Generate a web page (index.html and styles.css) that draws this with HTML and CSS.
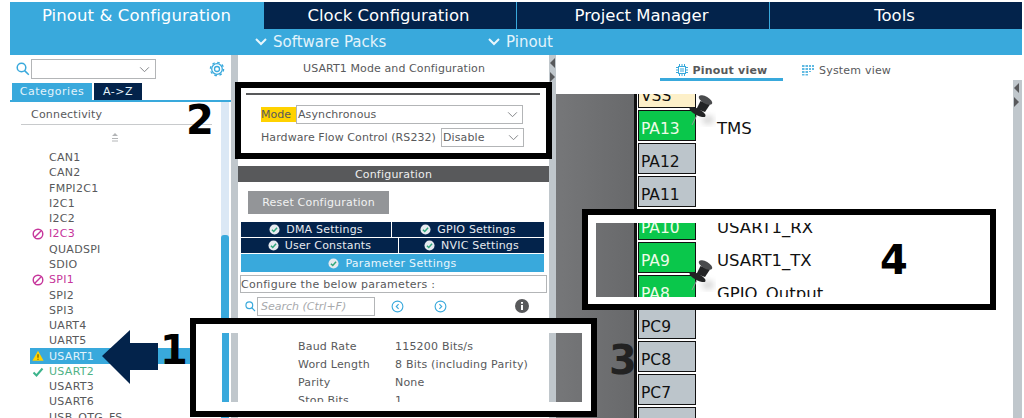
FILE: index.html
```html
<!DOCTYPE html>
<html lang="en">
<head>
<meta charset="utf-8">
<title>Pinout &amp; Configuration</title>
<link rel="stylesheet" href="styles.css">
</head>
<body>
<div class="app">
  <nav class="tabs">
    <div class="tab tab-active">Pinout &amp; Configuration</div>
    <div class="tab">Clock Configuration</div>
    <div class="tab">Project Manager</div>
    <div class="tab">Tools</div>
  </nav>
  <div class="subbar">
    <div class="sub-item sub-packs"><svg class="chev" viewBox="0 0 12 8"><path d="M1 1l5 5 5-5"/></svg>Software Packs</div>
    <div class="sub-item"><svg class="chev" viewBox="0 0 12 8"><path d="M1 1l5 5 5-5"/></svg>Pinout</div>
  </div>
  <main class="main">
    <aside class="sidebar">
      <div class="side-search">
        <svg class="ic-search" viewBox="0 0 14 14"><circle cx="5.5" cy="5.5" r="4.3"/><path d="M8.6 8.6l4.2 4.2"/></svg>
        <div class="combo"><svg class="caret" viewBox="0 0 12 8"><path d="M1 1.500l5 5 5-5"/></svg></div>
        <svg class="ic-gear" viewBox="0 0 16 16"><circle cx="8" cy="8" r="2.500"/><circle cx="8" cy="8" r="5.300"/><circle cx="8" cy="8" r="6.600" stroke-dasharray="2.600 2.590"/></svg>
      </div>
      <div class="cat-tabs">
        <div class="cat cat-on">Categories</div>
        <div class="cat cat-off">A-&gt;Z</div>
      </div>
      <div class="tree">
        <div class="tree-list">
          <div class="tree-head">Connectivity</div>
          <div class="tree-up"><svg viewBox="0 0 8 10"><path d="M4 0l3 3H1zM1 5h6v1H1zM1 7.500h6v1H1z"/></svg></div>
          <div class="row">CAN1</div>
          <div class="row">CAN2</div>
          <div class="row">FMPI2C1</div>
          <div class="row">I2C1</div>
          <div class="row">I2C2</div>
          <div class="row row-bad"><svg class="st" viewBox="0 0 12 12"><circle cx="6" cy="6" r="4.800"/><path d="M2.800 9.200l6.400-6.400"/></svg>I2C3</div>
          <div class="row">QUADSPI</div>
          <div class="row">SDIO</div>
          <div class="row row-bad"><svg class="st" viewBox="0 0 12 12"><circle cx="6" cy="6" r="4.800"/><path d="M2.800 9.200l6.400-6.400"/></svg>SPI1</div>
          <div class="row">SPI2</div>
          <div class="row">SPI3</div>
          <div class="row">UART4</div>
          <div class="row">UART5</div>
          <div class="row row-sel"><svg class="st st-warn" viewBox="0 0 12 12"><path d="M6 .8l5.600 10H.4z"/><path class="mark" d="M6 4.300v3.500M6 8.800v1"/></svg>USART1</div>
          <div class="row row-ok"><svg class="st st-ok" viewBox="0 0 12 12"><path d="M1.500 6.500l3 3 6-7"/></svg>USART2</div>
          <div class="row">USART3</div>
          <div class="row">USART6</div>
          <div class="row">USB_OTG_FS</div>
        </div>
        <div class="scroll"><div class="thumb"></div></div>
      </div>
    </aside>
    <div class="divider"></div>
    <section class="panel">
      <div class="panel-title">USART1 Mode and Configuration</div>
      <div class="mode-wrap">
        <div class="mode-rule"></div>
        <div class="mode-row">
          <span class="mode-label">Mode</span>
          <div class="select select-mode">Asynchronous<svg class="caret" viewBox="0 0 12 8"><path d="M1 1.500l5 5 5-5"/></svg></div>
        </div>
        <div class="mode-row mode-row2">
          <span class="flow-label">Hardware Flow Control (RS232)</span>
          <div class="select select-flow">Disable<svg class="caret" viewBox="0 0 12 8"><path d="M1 1.500l5 5 5-5"/></svg></div>
        </div>
      </div>
      <div class="conf-bar">Configuration</div>
      <div class="conf-body">
        <div class="reset">Reset Configuration</div>
        <div class="set-grid">
          <div class="set-row">
            <div class="set set-dma"><svg class="okc" viewBox="0 0 12 12"><circle cx="6" cy="6" r="5.500"/><path d="M3.200 6.200l2 2 3.600-4"/></svg>DMA Settings</div>
            <div class="set set-fill"><svg class="okc" viewBox="0 0 12 12"><circle cx="6" cy="6" r="5.500"/><path d="M3.200 6.200l2 2 3.600-4"/></svg>GPIO Settings</div>
          </div>
          <div class="set-row">
            <div class="set set-user"><svg class="okc" viewBox="0 0 12 12"><circle cx="6" cy="6" r="5.500"/><path d="M3.200 6.200l2 2 3.600-4"/></svg>User Constants</div>
            <div class="set set-fill"><svg class="okc" viewBox="0 0 12 12"><circle cx="6" cy="6" r="5.500"/><path d="M3.200 6.200l2 2 3.600-4"/></svg>NVIC Settings</div>
          </div>
          <div class="set set-param"><svg class="okc" viewBox="0 0 12 12"><circle cx="6" cy="6" r="5.500"/><path d="M3.200 6.200l2 2 3.600-4"/></svg>Parameter Settings</div>
        </div>
        <div class="cfg-note">Configure the below parameters :</div>
        <div class="find-row">
          <svg class="ic-search ic-find" viewBox="0 0 14 14"><circle cx="5.500" cy="5.500" r="4.300"/><path d="M8.600 8.600l4.200 4.200"/></svg>
          <div class="find">Search (Ctrl+F)</div>
          <svg class="nav nav-prev" viewBox="0 0 14 14"><circle cx="7" cy="7" r="5.800"/><path d="M8.200 4.500L5.700 7l2.500 2.500"/></svg>
          <svg class="nav nav-next" viewBox="0 0 14 14"><circle cx="7" cy="7" r="5.800"/><path d="M5.800 4.500L8.300 7 5.800 9.500"/></svg>
          <svg class="info" viewBox="0 0 14 14"><circle cx="7" cy="7" r="7"/><path d="M7 6v5M7 3v1.800"/></svg>
        </div>
        <div class="params">
          <div class="param"><span class="p-k">Baud Rate</span><span>115200 Bits/s</span></div>
          <div class="param"><span class="p-k">Word Length</span><span>8 Bits (including Parity)</span></div>
          <div class="param"><span class="p-k">Parity</span><span>None</span></div>
          <div class="param"><span class="p-k">Stop Bits</span><span>1</span></div>
          <div class="param param-head">Advanced Parameters</div>
        </div>
      </div>
    </section>
    <div class="divider">
      <span class="tri tri-l"></span><span class="tri tri-r"></span>
    </div>
    <section class="view">
      <div class="view-tabs">
        <div class="vt vt-on">
          <svg class="ic-chip" viewBox="0 0 12 12"><rect x="2.500" y="2.500" width="7" height="7"/><rect class="core" x="4" y="4" width="4" height="4"/><path d="M3.500 0v2M6 0v2M8.500 0v2M3.500 10v2M6 10v2M8.500 10v2M0 3.500h2M0 6h2M0 8.500h2M10 3.500h2M10 6h2M10 8.500h2"/></svg>
          Pinout view
        </div>
        <div class="vt">
          <svg class="ic-sys" viewBox="0 0 12 12"><path d="M0 1h2.500v2H0zM3.500 1H6v2H3.500zM7 1h2v2H7zM10 1h2v2h-2zM0 4h2.500v2H0zM3.500 4H6v2H3.500zM7 4h2v2H7zM10 4h2v2h-2zM0 7h2.500v2H0zM3.500 7H6v2H3.500zM7 7h2v1H7zM0 10h2.500v1.500H0zM3.500 10H6v1.500H3.500z"/></svg>
          System view
        </div>
      </div>
      <div class="canvas">
        <div class="chip"></div>
        <div class="pins">
          <div class="pin-row"><div class="pin pin-vss">VSS</div></div>
          <div class="pin-row"><div class="pin pin-on">PA13</div><span class="pin-label">TMS</span>
            <svg class="tack" viewBox="0 0 30 32"><ellipse class="tack-sh" cx="22" cy="25" rx="6" ry="4"/><path class="tack-needle" d="M11 20L6 30"/><path class="tack-body" d="M14.500 6L24 9.500 19 17 10.500 14z"/><ellipse class="tack-body" cx="11.500" cy="17" rx="9" ry="3.200" transform="rotate(28 11.500 17)"/><ellipse class="tack-head" cx="19.500" cy="5" rx="7.500" ry="3.400" transform="rotate(30 19.500 5)"/></svg>
          </div>
          <div class="pin-row"><div class="pin">PA12</div></div>
          <div class="pin-row"><div class="pin">PA11</div></div>
          <div class="pin-row"><div class="pin pin-on">PA10</div><span class="pin-label">USART1_RX</span></div>
          <div class="pin-row"><div class="pin pin-on">PA9</div><span class="pin-label">USART1_TX</span></div>
          <div class="pin-row"><div class="pin pin-on">PA8</div><span class="pin-label">GPIO_Output</span>
            <svg class="tack" viewBox="0 0 30 32"><ellipse class="tack-sh" cx="22" cy="25" rx="6" ry="4"/><path class="tack-needle" d="M11 20L6 30"/><path class="tack-body" d="M14.500 6L24 9.500 19 17 10.500 14z"/><ellipse class="tack-body" cx="11.500" cy="17" rx="9" ry="3.200" transform="rotate(28 11.500 17)"/><ellipse class="tack-head" cx="19.500" cy="5" rx="7.500" ry="3.400" transform="rotate(30 19.500 5)"/></svg>
          </div>
          <div class="pin-row"><div class="pin">PC9</div></div>
          <div class="pin-row"><div class="pin">PC8</div></div>
          <div class="pin-row"><div class="pin">PC7</div></div>
          <div class="pin-row"><div class="pin"></div></div>
        </div>
      </div>
      <div class="view-scroll"><span class="tri tri-l"></span><span class="tri tri-r"></span></div>
    </section>
  </main>
</div>

<div class="note note-2"></div>
<div class="note note-3"><div class="win win-3"></div></div>
<div class="note note-4"><div class="win win-4"></div></div>
<svg class="arrow" viewBox="0 0 56 54"><path d="M0 26L28 0v13h28v27H28v14z"/></svg>
<span class="num num-1">1</span>
<span class="num num-2">2</span>
<span class="num num-3">3</span>
<span class="num num-4">4</span>
</body>
</html>
```
FILE: styles.css
```css
* { box-sizing: border-box; }
html, body { margin: 0; height: 100%; overflow: hidden; background: #fff; }
body { font-family: "DejaVu Sans", sans-serif; color: #58595b; position: relative; }
svg { display: block; flex: none; }

.app { width: 1012px; height: 416px; margin: 2px 0 0 10px; display: flex; flex-direction: column; }

.tabs { display: flex; height: 27px; background: #39a9dc; }
.tab { flex: 1; background: #03234b; color: #fff; font-size: 16.500px; display: flex; align-items: center; justify-content: center; margin-left: 1px; padding-right: 3px; }
.tab-active { background: #39a9dc; color: #fff; margin-left: 0; flex: none; width: 253px; letter-spacing: .1px; padding-right: 0; }

.subbar { height: 26px; background: #39a9dc; display: flex; align-items: center; padding-left: 245px; color: #e3f3fb; font-size: 15px; }
.sub-item { display: flex; align-items: center; gap: 6px; }
.sub-packs { width: 233px; }
.chev { width: 12px; height: 8px; }
.chev path { fill: none; stroke: #e9f6fc; stroke-width: 2; }

.main { flex: 1; display: flex; min-height: 0; overflow: hidden; font-size: 11px; }

.sidebar { width: 221px; display: flex; flex-direction: column; }
.side-search { height: 28px; display: flex; align-items: center; position: relative; padding-left: 6px; }
.ic-search { width: 14px; height: 14px; }
.ic-search circle, .ic-search path { fill: none; stroke: #39a9dc; stroke-width: 1.500; }
.combo { width: 125px; height: 20px; margin-left: 1px; border: 1px solid #b3b5b7; display: flex; align-items: center; justify-content: flex-end; padding-right: 5px; }
.caret { width: 11px; height: 7px; }
.caret path { fill: none; stroke: #808285; stroke-width: 1.100; }
.ic-gear { width: 16px; height: 16px; margin-left: auto; margin-right: 6px; }
.ic-gear circle { fill: none; stroke: #39a9dc; stroke-width: 1.300; }

.cat-tabs { height: 19px; display: flex; padding-left: 2px; gap: 2px; border-bottom: 2px solid #39a9dc; }
.cat { height: 17px; font-size: 11px; letter-spacing: .5px; display: flex; align-items: center; justify-content: center; color: #e3f3fb; }
.cat-on { width: 80px; background: #39a9dc; }
.cat-off { width: 48px; background: #03234b; }

.tree { flex: 1; min-height: 0; display: flex; }
.tree-list { flex: 1; min-width: 0; }
.tree-head { height: 23px; margin: 0 9px 0 11px; padding: 2px 0 0 10px; border-bottom: 1px solid #c8cacc; display: flex; align-items: center; font-size: 11px; letter-spacing: .2px; }
.tree-up { height: 25px; display: flex; align-items: center; justify-content: center; padding-right: 2px; }
.tree-up svg { width: 8px; height: 10px; fill: #b3b5b7; }
.row { height: 15.280px; padding-left: 39px; display: flex; align-items: center; position: relative; font-size: 11px; letter-spacing: .3px; white-space: nowrap; }
.row-bad { color: #c6359b; }
.row-ok { color: #4fb286; }
.row-sel { background: linear-gradient(#39a9dc, #39a9dc) 20px 0 / 191px 100% no-repeat; color: #e3f3fb; }
.st { width: 12px; height: 12px; position: absolute; left: 22px; top: 2px; }
.row-bad .st circle, .row-bad .st path { fill: none; stroke: #c6359b; stroke-width: 1.400; }
.st-warn > path:first-child { fill: #ffd200; }
.st-warn .mark { fill: none; stroke: #6b5a00; stroke-width: 1.200; }
.st-ok path { fill: none; stroke: #3cb48c; stroke-width: 2; }

.scroll { width: 8px; margin-right: 2px; padding-top: 133px; background: #dbe8f5; }
.thumb { height: 300px; background: #39a9dc; border-radius: 3px 3px 0 0; }

.divider { width: 7px; background: #c0c7cc; position: relative; }
.tri { position: absolute; width: 0; height: 0; border-style: solid; border-color: transparent; left: 1px; }
.tri-l { top: 3px; border-width: 5px 5px 5px 0; border-right-color: #58595b; }
.tri-r { top: 17px; border-width: 5px 0 5px 5px; border-left-color: #58595b; }

.panel { width: 311px; display: flex; flex-direction: column; font-size: 11px; }
.panel-title { height: 25px; display: flex; align-items: center; justify-content: center; letter-spacing: .1px; padding: 2px 0 0 1px; }
.mode-wrap { height: 86px; padding: 13px 25px 0 23px; }
.mode-wrap .mode-rule { height: 2px; background: #58595b; margin: 0 -16px 9px -15px; }
.mode-row { display: flex; align-items: center; height: 19px; padding-top: 1px; }
.mode-row2 { margin-top: 5px; padding-top: 0; }
.mode-label { width: 35px; height: 15px; background: #ffd200; display: flex; align-items: center; }
.select { height: 19px; border: 1px solid #b3b5b7; display: flex; align-items: center; justify-content: space-between; padding: 0 4px 0 1px; font-size: 11px; letter-spacing: .1px; }
.select-mode { width: 227px; }
.flow-label { width: 180px; letter-spacing: .08px; white-space: nowrap; }
.select-flow { width: 83px; }

.conf-bar { height: 16px; background: #58595b; color: #eee; display: flex; align-items: center; justify-content: center; letter-spacing: .2px; }
.conf-body { flex: 1; min-height: 0; display: flex; flex-direction: column; padding: 9px 2px 0 2px; }
.reset { width: 141px; height: 23px; margin-left: 8px; background: #939598; color: #f1f2f2; display: flex; align-items: center; justify-content: center; letter-spacing: .2px; flex: none; }
.set-grid { margin: 8px 3px 0 1px; display: flex; flex-direction: column; flex: none; }
.set-row { display: flex; gap: 1px; margin-bottom: 1px; }
.set { height: 15px; background: #03234b; color: #e6eaef; display: flex; align-items: center; justify-content: center; gap: 6px; letter-spacing: .2px; }
.set-dma { width: 150px; }
.set-user { width: 157px; }
.set-fill { flex: 1; }
.set-param { height: 18px; background: #39a9dc; color: #eaf6fc; letter-spacing: .3px; }
.okc { width: 11px; height: 11px; }
.okc circle { fill: #e6eaef; }
.okc path { fill: none; stroke: #2fa67a; stroke-width: 1.600; }
.cfg-note { height: 18px; margin-top: 3px; border: 1px solid #b3b5b7; display: flex; align-items: center; letter-spacing: .28px; white-space: nowrap; flex: none; }
.find-row { display: flex; align-items: center; height: 20px; margin-top: 3px; flex: none; }
.ic-find { margin-left: 5px; width: 11px; height: 11px; }
.find { width: 118px; height: 19px; margin-left: 1px; border: 1px solid #b3b5b7; color: #a7a9ac; font-style: italic; display: flex; align-items: center; padding-left: 3px; }
.nav { width: 13px; height: 13px; }
.nav circle, .nav path { fill: none; stroke: #39a9dc; stroke-width: 1.200; }
.nav-prev { margin-left: 16px; }
.nav-next { margin-left: 30px; }
.info { width: 14px; height: 14px; margin-left: 68px; }
.info circle { fill: #58595b; }
.info path { fill: none; stroke: #fff; stroke-width: 2; }
.params { padding: 21px 0 0 58px; }
.param { display: flex; height: 18px; align-items: center; letter-spacing: .2px; white-space: nowrap; }
.p-k { width: 97px; }
.param-head { margin: 8px 0 0 -36px; }

.view { flex: 1; min-width: 0; display: flex; flex-direction: column; position: relative; }
.view-tabs { height: 39px; display: flex; align-items: flex-start; padding: 7px 0 0 104px; gap: 19px; flex: none; }
.vt { height: 16px; display: flex; align-items: center; gap: 5px; letter-spacing: .2px; font-size: 11px; white-space: nowrap; }
.vt-on { width: 123px; height: 16px; font-weight: bold; justify-content: center; box-sizing: content-box; border-bottom: 3px solid #39a9dc; }
.ic-chip { width: 12px; height: 12px; }
.ic-chip rect, .ic-chip path { fill: none; stroke: #39a9dc; stroke-width: 1; }
.ic-chip .core { fill: #9ad3ed; stroke: none; }
.ic-sys { width: 12px; height: 12px; fill: #39a9dc; opacity: .8; }

.canvas { flex: 1; min-height: 0; display: flex; overflow: hidden; }
.chip { width: 78px; background: linear-gradient(90deg, #767779, #68696b); flex: none; }
.pins { border-left: 3px solid #111; padding-left: 1px; margin-top: -18px; flex: 1; min-width: 0; }
.pin-row { display: flex; align-items: center; height: 33px; position: relative; }
.pin { width: 58px; height: 31px; border: 1px solid #111; background: #bcc5cb; color: #111; font-size: 15.500px; display: flex; align-items: center; padding: 7px 0 0 2px; flex: none; }
.pin-on { background: #0ac74b; color: #eefbe8; }
.pin-vss { background: #fdf0c9; }
.pin-label { margin-left: 21px; color: #111; font-size: 16.500px; padding-top: 5px; white-space: nowrap; }
.tack { position: absolute; width: 30px; height: 32px; left: 48px; top: -14px; }
.tack-sh { fill: #d0d0d0; filter: blur(3px); }
.tack-needle { stroke: #8f9a96; stroke-width: 1; }
.tack-body { fill: #232425; }
.tack-head { fill: #4a4b4d; }

.view-scroll { position: absolute; top: 25px; right: 0; bottom: 0; width: 9px; background: #c0c7cc; }

.note { position: absolute; border: 6px solid #000; }
.note-2 { left: 235px; top: 82px; width: 317px; height: 77px; }
.note-3 { left: 190px; top: 318px; width: 407px; height: 99px; }
.note-4 { left: 582px; top: 209px; width: 414px; height: 101px; }
.win { width: 100%; height: 100%; border-style: solid; border-color: #fff; }
.win-3 { border-width: 9px 9px 9px 26px; }
.win-4 { border-width: 8px 7px 7px 8px; }

.arrow { position: absolute; left: 102px; top: 330px; width: 56px; height: 54px; fill: #03234b; }
.num { position: absolute; font: bold 40px/40px "DejaVu Sans", sans-serif; color: #000; }
.num-1 { left: 160px; top: 330px; }
.num-2 { left: 186px; top: 100px; }
.num-3 { left: 609px; top: 340px; color: #222; }
.num-4 { left: 880px; top: 240px; }
```
